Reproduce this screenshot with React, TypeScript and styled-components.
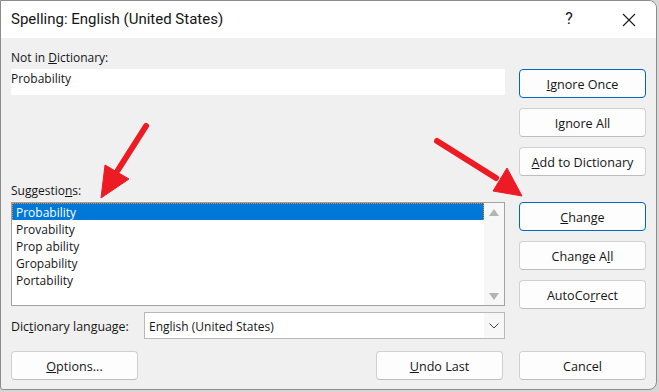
import React from "react";
import styled, { createGlobalStyle } from "styled-components";

const FONT = `"Segoe UI", "Open Sans", Roboto, sans-serif`;
const TITLE_FONT = `"Segoe UI", Roboto, sans-serif`;

const GlobalStyle = createGlobalStyle`
  html, body {
    margin: 0;
    padding: 0;
    background: #d6d6d6;
  }
  body {
    font-family: ${FONT};
    font-size: 12px;
    color: #161616;
  }
`;

const Window = styled.div`
  position: relative;
  width: 657px;
  height: 390px;
  box-sizing: border-box;
  border: 1px solid #8c8c8c;
  border-radius: 0 8px 8px 3px;
  background: #f0f0f0;
  overflow: hidden;
  display: flex;
  flex-direction: column;
`;

const TitleBar = styled.div`
  height: 37px;
  background: #ffffff;
  display: flex;
  align-items: center;
  padding-left: 10px;
  font-family: ${TITLE_FONT};
  .title {
    font-size: 15px;
    flex: 1;
    margin-top: -2px;
  }
  .help {
    font-size: 16px;
    width: 18px;
    text-align: center;
    margin-right: 28px;
    margin-top: -2px;
  }
  .close {
    width: 46px;
    display: flex;
    justify-content: center;
    margin-right: 4px;
  }
`;

const Body = styled.div`
  flex: 1;
  padding: 11px 10px 0 10px;
  display: flex;
  flex-direction: column;
`;

const Main = styled.div`
  display: grid;
  grid-template-columns: 494px 127px;
  column-gap: 14px;
`;

const LeftCol = styled.div`
  display: flex;
  flex-direction: column;
`;

const RightCol = styled.div`
  padding-top: 20px;
  display: flex;
  flex-direction: column;
  gap: 10px;
`;

const Label = styled.div<{ $top?: number }>`
  height: 16px;
  line-height: 18px;
  margin-top: ${({ $top }) => $top || 0}px;
  margin-bottom: 4px;
  white-space: nowrap;
`;

const TextBox = styled.div`
  height: 26px;
  background: #ffffff;
  line-height: 19px;
`;

const ListBox = styled.div`
  height: 104px;
  box-sizing: border-box;
  border: 1px solid #a2a2a2;
  background: #ffffff;
  display: flex;
`;

const ListItems = styled.div`
  flex: 1;
`;

const ListItem = styled.div<{ $selected?: boolean }>`
  height: 17px;
  line-height: 17px;
  box-sizing: border-box;
  padding-left: 3px;
  color: ${({ $selected }) => ($selected ? "#ffffff" : "#161616")};
  background: ${({ $selected }) => ($selected ? "#0078d7" : "transparent")};
  border: 1px ${({ $selected }) => ($selected ? "dotted #f08a24" : "solid transparent")};
  border-width: 1px 1px 0;
`;

const ScrollBar = styled.div`
  width: 20px;
  background: #f7f7f7;
  display: flex;
  flex-direction: column;
  justify-content: space-between;
  align-items: center;
  padding: 6px 0 5px;
`;

const LangRow = styled.div`
  margin-top: 6px;
  display: flex;
  align-items: center;
  height: 27px;
`;

const LangLabel = styled.div`
  width: 133px;
  white-space: nowrap;
  padding-top: 2px;
  font-size: 12.4px;
`;

const Select = styled.div`
  flex: 1;
  height: 27px;
  box-sizing: border-box;
  border: 1px solid #b9b9b9;
  background: #ffffff;
  display: flex;
  align-items: center;
  padding-left: 4px;
  .value {
    flex: 1;
    padding-top: 2px;
  }
  .chev {
    width: 20px;
    height: 25px;
    background: #f7f7f7;
    display: flex;
    align-items: center;
    justify-content: center;
  }
`;

const BottomBar = styled.div`
  margin-top: 12px;
  display: flex;
  gap: 16px;
  .spacer {
    flex: 1;
  }
`;

const Button = styled.div<{ $primary?: boolean }>`
  width: 127px;
  height: 29px;
  box-sizing: border-box;
  border-radius: 4px;
  border: 1px solid ${({ $primary }) => ($primary ? "#0067c0" : "#d0d0d0")};
  border-bottom-color: ${({ $primary }) => ($primary ? "#0067c0" : "#bdbdbd")};
  background: #fdfdfd;
  display: flex;
  align-items: center;
  justify-content: center;
  padding-top: 2px;
  font-size: 12.6px;
  color: #161616;
`;

const Arrows = styled.svg`
  position: absolute;
  left: -1px;
  top: -1px;
  pointer-events: none;
`;

const Triangle = ({ up }: { up?: boolean }) => (
  <svg width="10" height="7" viewBox="0 0 10 7">
    <path d={up ? "M5 0 L10 7 L0 7 Z" : "M0 0 L10 0 L5 7 Z"} fill="#b4b4b4" />
  </svg>
);

const suggestions = ["Probability", "Provability", "Prop ability", "Gropability", "Portability"];

const App = () => {
  return (
    <>
      <GlobalStyle />
      <Window>
        <TitleBar>
          <span className="title">Spelling: English (United States)</span>
          <span className="help">?</span>
          <span className="close">
            <svg width="14" height="14" viewBox="0 0 14 14">
              <path d="M1 1 L13 13 M13 1 L1 13" stroke="#1b1b1b" strokeWidth="1.1" />
            </svg>
          </span>
        </TitleBar>
        <Body>
          <Main>
            <LeftCol>
              <Label>
                Not in <u>D</u>ictionary:
              </Label>
              <TextBox>Probability</TextBox>
              <Label $top={87}>
                Suggestio<u>n</u>s:
              </Label>
              <ListBox>
                <ListItems>
                  {suggestions.map((s, i) => (
                    <ListItem key={s} $selected={i === 0}>
                      {s}
                    </ListItem>
                  ))}
                </ListItems>
                <ScrollBar>
                  <Triangle up />
                  <Triangle />
                </ScrollBar>
              </ListBox>
              <LangRow>
                <LangLabel>
                  Dic<u>t</u>ionary language:
                </LangLabel>
                <Select>
                  <span className="value">English (United States)</span>
                  <span className="chev">
                    <svg width="10" height="6" viewBox="0 0 10 6">
                      <path d="M0.5 0.5 L5 5 L9.5 0.5" stroke="#444" fill="none" strokeWidth="1" />
                    </svg>
                  </span>
                </Select>
              </LangRow>
            </LeftCol>
            <RightCol>
              <Button $primary>
                <span>
                  <u>I</u>gnore Once
                </span>
              </Button>
              <Button>
                <span>
                  I<u>g</u>nore All
                </span>
              </Button>
              <Button>
                <span>
                  <u>A</u>dd to Dictionary
                </span>
              </Button>
              <Button $primary style={{ marginTop: 16 }}>
                <span>
                  <u>C</u>hange
                </span>
              </Button>
              <Button>
                <span>
                  Change A<u>l</u>l
                </span>
              </Button>
              <Button>
                <span>
                  AutoCo<u>r</u>rect
                </span>
              </Button>
            </RightCol>
          </Main>
          <BottomBar>
            <Button>
              <span>
                <u>O</u>ptions...
              </span>
            </Button>
            <span className="spacer" />
            <Button>
              <span>
                <u>U</u>ndo Last
              </span>
            </Button>
            <Button>
              <span>Cancel</span>
            </Button>
          </BottomBar>
        </Body>
        <Arrows width="659" height="392" viewBox="0 0 659 392">
          <g fill="#ed1c24" stroke="#ed1c24">
            <line x1="146" y1="126" x2="118" y2="170" strokeWidth="6" strokeLinecap="round" />
            <path d="M101 198 L105 165 L129 179 Z" strokeWidth="1" strokeLinejoin="round" />
            <line x1="437" y1="141" x2="496" y2="178" strokeWidth="6" strokeLinecap="round" />
            <path d="M522 196 L507 168 L493 191 Z" strokeWidth="1" strokeLinejoin="round" />
          </g>
        </Arrows>
      </Window>
    </>
  );
};

export default App;
